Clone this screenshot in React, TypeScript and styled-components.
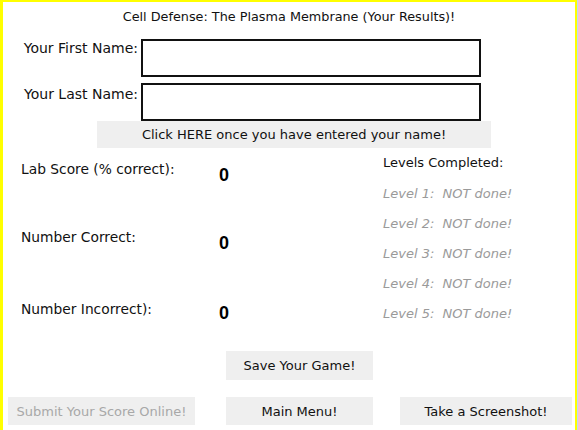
import React from "react";
import styled, { createGlobalStyle } from "styled-components";

const GlobalStyle = createGlobalStyle`
  html, body {
    margin: 0;
    padding: 0;
    background: #ffffff;
    overflow: hidden;
  }
`;

const FONT = `"Comic Sans MS", "DejaVu Sans", sans-serif`;

const Page = styled.div`
  width: 578px;
  height: 430px;
  background: #b9dff2;
`;

const Frame = styled.div`
  width: 577px;
  height: 430px;
  box-sizing: border-box;
  background: #ffffff;
  border-top: 2px solid #ffff00;
  border-left: 3px solid #ffff00;
  border-right: 2px solid #ffff00;
  font-family: ${FONT};
  font-size: 13px;
  color: #111111;
  display: flex;
  flex-direction: column;
`;

const Title = styled.div`
  padding-top: 6px;
  line-height: 18px;
  font-size: 12.8px;
  text-align: center;
`;

const NameForm = styled.div`
  margin-top: 13px;
  display: grid;
  grid-template-columns: 135px 340px;
  column-gap: 3px;
  row-gap: 6px;
`;

const NameLabel = styled.label<{ $nudge: number }>`
  text-align: right;
  font-size: 14px;
  line-height: 18px;
  padding-top: ${(p) => p.$nudge}px;
`;

const NameInput = styled.div`
  height: 38px;
  box-sizing: border-box;
  border: 2px solid #111111;
  background: #ffffff;
`;

const Button = styled.div<{ $w: number; $muted?: boolean }>`
  width: ${(p) => p.$w}px;
  height: 28px;
  box-sizing: border-box;
  background: #efefef;
  display: flex;
  align-items: center;
  justify-content: center;
  color: ${(p) => (p.$muted ? "#a8a8a8" : "#111111")};
  white-space: nowrap;
`;

const NameButton = styled(Button)`
  height: 27px;
  margin-left: 94px;
`;

const SaveButton = styled(Button)`
  height: 29px;
`;

const Stats = styled.div`
  padding-top: 6px;
  display: flex;
`;

const ScoreList = styled.div`
  width: 362px;
  padding-left: 18px;
  padding-top: 6px;
`;

const ScoreRow = styled.div<{ $h: number }>`
  height: ${(p) => p.$h}px;
  display: grid;
  grid-template-columns: 198px auto;
  align-items: start;
  font-size: 13.8px;
  line-height: 18px;
`;

const ScoreValue = styled.span<{ $drop: number }>`
  margin-top: ${(p) => p.$drop}px;
  font-family: "Liberation Sans", Arial, sans-serif;
  font-weight: bold;
  font-size: 18px;
  color: #000000;
`;

const Levels = styled.div`
  display: flex;
  flex-direction: column;
`;

const LevelsHeader = styled.div`
  line-height: 18px;
  margin-bottom: 7px;
`;

const LevelRow = styled.div`
  line-height: 30px;
  font-style: italic;
  color: #9a9a9a;
  white-space: pre;
`;

const ButtonGrid = styled.div`
  padding-left: 5px;
  display: grid;
  grid-template-columns: 218px 174px 172px;
  justify-items: start;
`;

const SaveRow = styled(ButtonGrid)`
  margin-top: auto;
  margin-bottom: 17px;
`;

const BottomRow = styled(ButtonGrid)`
  margin-bottom: 5px;
`;

const scores = [
  { label: "Lab Score (% correct):", value: 0, h: 68, drop: 6 },
  { label: "Number Correct:", value: 0, h: 72, drop: 6 },
  { label: "Number Incorrect):", value: 0, h: 30, drop: 4 },
];

export default function App() {
  return (
    <Page>
      <GlobalStyle />
      <Frame>
        <Title>Cell Defense: The Plasma Membrane (Your Results)!</Title>
        <NameForm>
          <NameLabel $nudge={0}>Your First Name:</NameLabel>
          <NameInput />
          <NameLabel $nudge={2}>Your Last Name:</NameLabel>
          <NameInput />
        </NameForm>
        <NameButton $w={394}>Click HERE once you have entered your name!</NameButton>
        <Stats>
          <ScoreList>
            {scores.map((s) => (
              <ScoreRow key={s.label} $h={s.h}>
                <span>{s.label}</span>
                <ScoreValue $drop={s.drop}>{s.value}</ScoreValue>
              </ScoreRow>
            ))}
          </ScoreList>
          <Levels>
            <LevelsHeader>Levels Completed:</LevelsHeader>
            {[1, 2, 3, 4, 5].map((n) => (
              <LevelRow key={n}>{`Level ${n}:  NOT done!`}</LevelRow>
            ))}
          </Levels>
        </Stats>
        <SaveRow>
          <span />
          <SaveButton $w={147}>Save Your Game!</SaveButton>
        </SaveRow>
        <BottomRow>
          <Button $w={187} $muted>Submit Your Score Online!</Button>
          <Button $w={147}>Main Menu!</Button>
          <Button $w={172}>Take a Screenshot!</Button>
        </BottomRow>
      </Frame>
    </Page>
  );
}
